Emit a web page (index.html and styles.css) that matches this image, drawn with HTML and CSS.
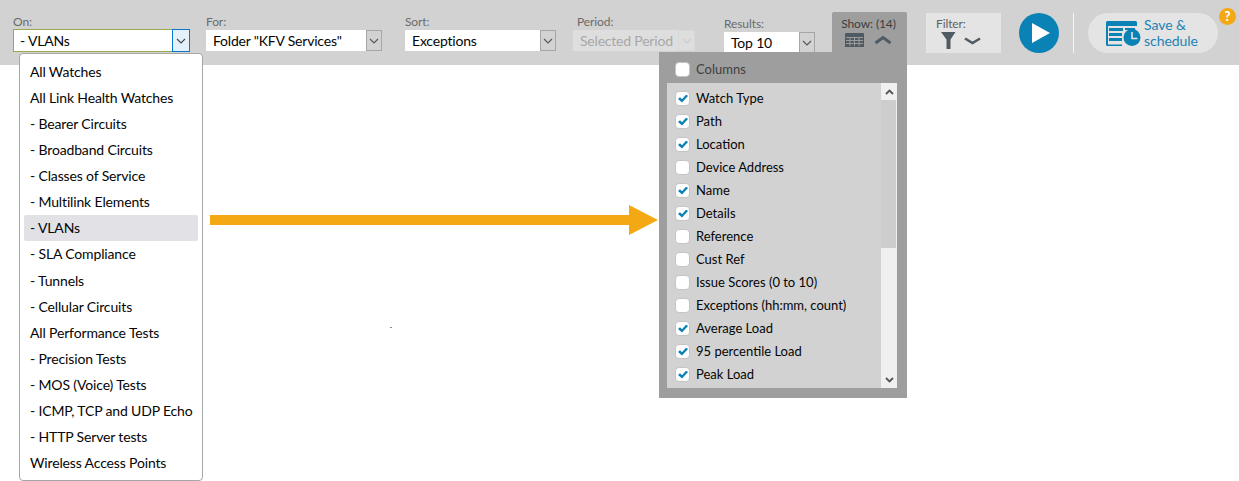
FILE: index.html
```html
<!DOCTYPE html>
<html lang="en">
<head>
<meta charset="utf-8">
<title>Report toolbar</title>
<link rel="stylesheet" href="styles.css">
</head>
<body>
<header class="toolbar">
  <div class="field field-on">
    <label class="field-label">On:</label>
    <div class="select select-focus">
      <span class="select-value">- VLANs</span>
      <span class="select-btn"><svg width="10" height="6" viewBox="0 0 10 6"><path d="M1 1l4 4 4-4" fill="none" stroke="#444" stroke-width="1.1"/></svg></span>
    </div>
  </div>
  <div class="field field-for">
    <label class="field-label">For:</label>
    <div class="select">
      <span class="select-value">Folder "KFV Services"</span>
      <span class="select-btn"><svg width="10" height="6" viewBox="0 0 10 6"><path d="M1 1l4 4 4-4" fill="none" stroke="#555" stroke-width="1.1"/></svg></span>
    </div>
  </div>
  <div class="field field-sort">
    <label class="field-label">Sort:</label>
    <div class="select">
      <span class="select-value">Exceptions</span>
      <span class="select-btn"><svg width="10" height="6" viewBox="0 0 10 6"><path d="M1 1l4 4 4-4" fill="none" stroke="#555" stroke-width="1.1"/></svg></span>
    </div>
  </div>
  <div class="field field-period">
    <label class="field-label">Period:</label>
    <div class="select select-disabled">
      <span class="select-value">Selected Period</span>
      <span class="select-btn"><svg width="10" height="6" viewBox="0 0 10 6"><path d="M1 1l4 4 4-4" fill="none" stroke="#ccc" stroke-width="1.1"/></svg></span>
    </div>
  </div>
  <div class="field field-results">
    <label class="field-label">Results:</label>
    <div class="select">
      <span class="select-value">Top 10</span>
      <span class="select-btn"><svg width="10" height="6" viewBox="0 0 10 6"><path d="M1 1l4 4 4-4" fill="none" stroke="#555" stroke-width="1.1"/></svg></span>
    </div>
  </div>
  <div class="show-tab">
    <span class="show-label">Show: (14)</span>
    <div class="show-icons">
      <svg width="19" height="14" viewBox="0 0 19 14"><path d="M1 0h17a1 1 0 0 1 1 1v13H0V1a1 1 0 0 1 1-1z" fill="#4f5a63"/><path d="M1 4.500h17M1 7.500h17M1 10.500h17M5 4v9M9.500 4v9M14 4v9" stroke="#9b9b9b" stroke-width="1"/></svg>
      <svg width="18" height="10" viewBox="0 0 18 10"><path d="M1.500 8L9 2.500 16.500 8" fill="none" stroke="#4f5a63" stroke-width="3"/></svg>
    </div>
  </div>
  <div class="filter">
    <span class="filter-label">Filter:</span>
    <div class="filter-icons">
      <svg width="15" height="17" viewBox="0 0 15 17"><path d="M0 0h14.500L9.500 7.500V17H5.500V7.500z" fill="#4f5a63"/></svg>
      <svg width="17" height="8" viewBox="0 0 17 8"><path d="M1 1.500L8.500 6 16 1.500" fill="none" stroke="#4f5a63" stroke-width="2.600"/></svg>
    </div>
  </div>
  <button class="run" type="button" aria-label="Run"><svg width="18" height="20" viewBox="0 0 18 20"><path d="M0 0l18 10L0 20z" fill="#fff"/></svg></button>
  <span class="divider"></span>
  <button class="save" type="button">
    <svg width="35" height="25" viewBox="0 0 35 25"><path d="M1.500 0h28A1.500 1.500 0 0 1 31 1.500V5H0V1.500A1.500 1.500 0 0 1 1.500 0z" fill="#0b82b5"/><path d="M0 5h2v18.500H16V25H1.500A1.500 1.500 0 0 1 0 23.500z" fill="#0b82b5"/><path d="M3 7h14v3H3zM3 12h13v3H3zM3 17h13v3H3z" fill="#0b82b5"/><path d="M19 7h10v2H19z" fill="#0b82b5"/><circle cx="26" cy="16.500" r="8.500" fill="#0b82b5"/><path d="M26 11v6.500h5.500" fill="none" stroke="#e4e4e4" stroke-width="1.600"/></svg>
    <span class="save-text">Save &amp;<br>schedule</span>
  </button>
</header>
<span class="help">?</span>

<ul class="menu">
  <li>All Watches</li>
  <li>All Link Health Watches</li>
  <li>- Bearer Circuits</li>
  <li>- Broadband Circuits</li>
  <li>- Classes of Service</li>
  <li>- Multilink Elements</li>
  <li class="menu-active">- VLANs</li>
  <li>- SLA Compliance</li>
  <li>- Tunnels</li>
  <li>- Cellular Circuits</li>
  <li>All Performance Tests</li>
  <li>- Precision Tests</li>
  <li>- MOS (Voice) Tests</li>
  <li>- ICMP, TCP and UDP Echo</li>
  <li>- HTTP Server tests</li>
  <li>Wireless Access Points</li>
</ul>

<div class="arrow"><span class="arrow-shaft"></span><span class="arrow-head"></span></div>
<span class="speck"></span>

<section class="columns">
  <div class="columns-head"><span class="box"></span><span>Columns</span></div>
  <div class="columns-body">
    <ul class="columns-list">
      <li><span class="box box-on"></span>Watch Type</li>
      <li><span class="box box-on"></span>Path</li>
      <li><span class="box box-on"></span>Location</li>
      <li><span class="box"></span>Device Address</li>
      <li><span class="box box-on"></span>Name</li>
      <li><span class="box box-on"></span>Details</li>
      <li><span class="box"></span>Reference</li>
      <li><span class="box"></span>Cust Ref</li>
      <li><span class="box"></span>Issue Scores (0 to 10)</li>
      <li><span class="box"></span>Exceptions (hh:mm, count)</li>
      <li><span class="box box-on"></span>Average Load</li>
      <li><span class="box box-on"></span>95 percentile Load</li>
      <li><span class="box box-on"></span>Peak Load</li>
    </ul>
    <div class="scrollbar">
      <span class="scroll-btn"><svg width="9" height="6" viewBox="0 0 9 6"><path d="M1 5l3.500-3.500L8 5" fill="none" stroke="#555" stroke-width="1.800"/></svg></span>
      <span class="scroll-thumb"></span>
      <span class="scroll-track"></span>
      <span class="scroll-btn"><svg width="9" height="6" viewBox="0 0 9 6"><path d="M1 1l3.500 3.500L8 1" fill="none" stroke="#555" stroke-width="1.800"/></svg></span>
    </div>
  </div>
</section>
</body>
</html>
```
FILE: styles.css
```css
* { box-sizing: border-box; }
html, body { margin: 0; padding: 0; }
body {
  width: 1239px;
  height: 481px;
  overflow: hidden;
  background: #fff;
  font-family: Lato, "Open Sans", sans-serif;
  font-size: 14px;
  color: #050505;
  position: relative;
}
ul { list-style: none; margin: 0; padding: 0; }
.toolbar {
  height: 65px;
  background: #d2d2d2;
  display: flex;
  align-items: flex-start;
  padding-left: 13px;
}
.field { display: flex; flex-direction: column; padding-top: 15px; }
.field-label { font-size: 12px; line-height: 14px; color: #6b6b6b; letter-spacing: -0.1px; }
.field-on { width: 177px; }
.field-for { width: 176px; margin-left: 16px; }
.field-sort { width: 151px; margin-left: 23px; }
.field-period { width: 122px; margin-left: 17px; }
.field-period .field-label { padding-left: 4px; }
.field-results { width: 91px; margin-left: 29px; padding-top: 17px; }
.select {
  display: flex;
  height: 21px;
  margin-top: 1px;
  background: #fff;
  line-height: 22px;
  font-size: 14px;
  letter-spacing: -0.2px;
}
.select-value { flex: 1; padding-left: 7px; white-space: nowrap; overflow: hidden; }
.select-btn {
  width: 16px;
  flex: none;
  margin-left: 1px;
  background: #d2d2d2;
  border: 1px solid #a6a6a6;
  display: flex;
  align-items: center;
  justify-content: center;
}
.select-focus {
  height: 23px;
  margin-top: 0;
  line-height: 24px;
  box-shadow: inset 0 0 0 1px #9aa84f;
}
.select-focus .select-btn { background: #e4f1fb; border: 1px solid #0b78d0; width: 18px; margin-left: 0; }
.select-disabled { background: #dedede; color: #a8a8a8; }
.select-disabled .select-btn { background: #dedede; border: 1px solid #d8d8d8; margin-left: 0; width: 17px; }
.show-tab {
  width: 75px;
  height: 53px;
  margin-top: 12px;
  margin-left: 17px;
  background: #9e9e9e;
  border-radius: 2px 2px 0 0;
  display: flex;
  flex-direction: column;
  align-items: center;
  padding-top: 4px;
}
.show-label { font-size: 12px; line-height: 15px; color: #3d3d3d; white-space: nowrap; letter-spacing: -0.1px; margin-left: -2px; }
.show-icons { display: flex; align-items: center; gap: 10px; margin: 2px 0 0 -2px; }
.filter {
  width: 75px;
  height: 40px;
  margin-top: 13px;
  margin-left: 19px;
  background: #e4e4e4;
  padding: 4px 0 0 10px;
}
.filter-label { display: block; font-size: 12px; line-height: 14px; color: #5f5f5f; letter-spacing: -0.1px; }
.filter-icons { display: flex; align-items: center; gap: 8px; margin: 1px 0 0 5px; }
.run {
  width: 40px;
  height: 40px;
  margin: 13px 0 0 18px;
  padding: 0 0 0 4px;
  border: 0;
  border-radius: 50%;
  background: #0b82b5;
  display: flex;
  align-items: center;
  justify-content: center;
}
.divider { width: 1px; height: 40px; margin: 13px 0 0 14px; background: #f4f4f4; }
.save {
  width: 130px;
  height: 40px;
  margin: 13px 0 0 14px;
  padding: 0 0 0 18px;
  border: 0;
  border-radius: 20px;
  background: #e4e4e4;
  display: flex;
  align-items: center;
  gap: 3px;
  font-family: inherit;
  text-align: left;
}
.save-text { font-size: 14px; line-height: 16px; color: #1c83b5; letter-spacing: -0.05px; }
.help {
  position: absolute;
  left: 1219px;
  top: 8px;
  width: 17px;
  height: 17px;
  border-radius: 50%;
  background: #f4a813;
  color: #fff;
  font-size: 13px;
  font-weight: 900;
  line-height: 17px;
  text-align: center;
}
.menu {
  position: absolute;
  left: 19px;
  top: 53px;
  width: 184px;
  height: 428px;
  background: #fff;
  border: 1px solid #a6a6a6;
  border-radius: 4px;
  padding: 4.500px 4px;
}
.menu li {
  height: 26.130px;
  line-height: 26px;
  padding-left: 6px;
  font-size: 14px;
  letter-spacing: -0.15px;
  white-space: nowrap;
  border-radius: 2px;
}
.menu .menu-active { background: #e1e1e6; }
.arrow { position: absolute; left: 210px; top: 205px; display: flex; align-items: center; height: 30px; }
.arrow-shaft { width: 419px; height: 10px; background: #f4a813; }
.arrow-head {
  width: 0;
  height: 0;
  border-left: 29px solid #f4a813;
  border-top: 15px solid transparent;
  border-bottom: 15px solid transparent;
}
.speck { position: absolute; left: 390px; top: 327px; width: 2px; height: 1px; background: #888; }
.columns {
  position: absolute;
  left: 659px;
  top: 52px;
  width: 248px;
  height: 346px;
  background: #9e9e9e;
  padding: 0 10px 10px 8px;
  display: flex;
  flex-direction: column;
}
.columns-head {
  height: 31px;
  padding: 3px 0 0 8px;
  display: flex;
  align-items: center;
  gap: 6px;
  color: #3f3f3f;
  font-size: 13px;
}
.columns-body { flex: 1; display: flex; background: #d2d2d2; min-height: 0; }
.columns-list { flex: 1; padding: 3.500px 0 0 8px; font-size: 13px; }
.columns-list li { height: 23px; display: flex; align-items: center; gap: 6px; white-space: nowrap; }
.box {
  width: 15px;
  height: 15px;
  flex: none;
  background: #fff;
  border: 1px solid #c4c4c4;
  border-radius: 4px;
  position: relative;
}
.box-on::after {
  content: "";
  position: absolute;
  left: 2px;
  top: 3px;
  width: 10px;
  height: 8px;
  background: #0b82b5;
  clip-path: polygon(0 55%, 20% 35%, 40% 60%, 82% 0, 100% 18%, 40% 100%);
}
.scrollbar { width: 16px; display: flex; flex-direction: column; background: #f0f0f0; }
.scroll-btn { height: 17px; flex: none; display: flex; align-items: center; justify-content: center; }
.scroll-thumb { height: 148px; flex: none; background: #cdcdcd; margin: 0 1px 0 0; }
.scroll-track { flex: 1; }
```
